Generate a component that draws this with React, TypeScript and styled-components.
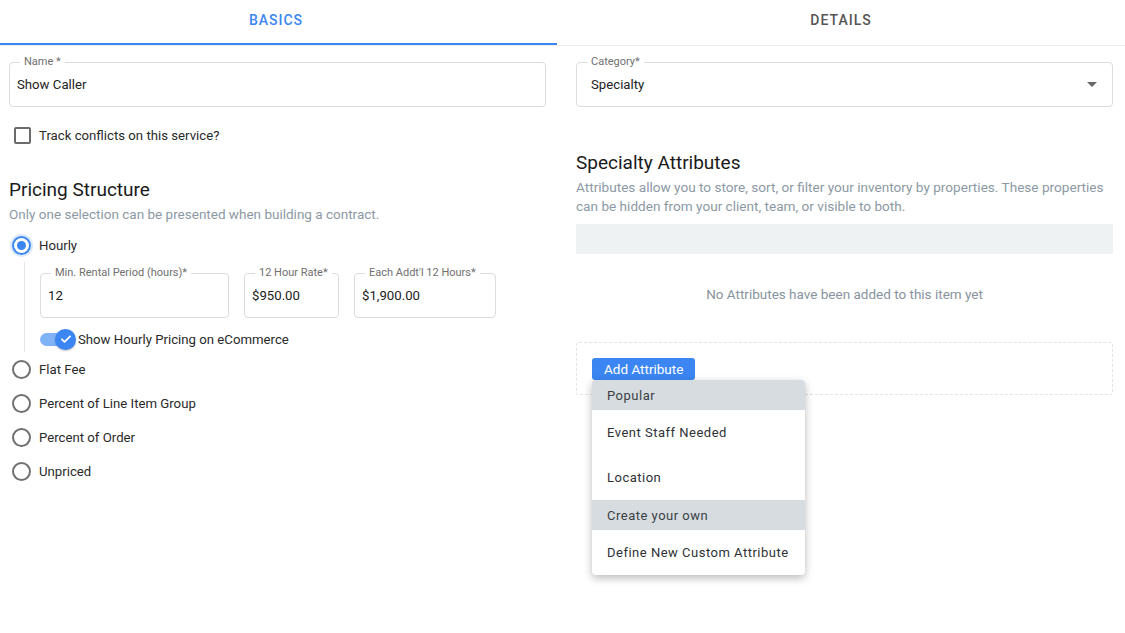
import React from "react";
import styled, { createGlobalStyle } from "styled-components";

const GlobalStyle = createGlobalStyle`
  html, body {
    margin: 0;
    padding: 0;
    background: #ffffff;
    font-family: Roboto, "Liberation Sans", Arial, sans-serif;
    color: #222;
  }
  * { box-sizing: border-box; }
`;

const BLUE = "#3b86f2";

type FieldProps = {
  label: string;
  value: string;
  width?: string;
  select?: boolean;
};

const Field = ({ label, value, width, select }: FieldProps) => (
  <FieldBox $width={width}>
    <FieldLegend>{label}</FieldLegend>
    <FieldValue $select={select}>
      <span>{value}</span>
      {select && <ArrowDown />}
    </FieldValue>
  </FieldBox>
);

const Radio = ({ label, checked }: { label: string; checked?: boolean }) => (
  <RadioRow>
    <RadioCircle $checked={checked}>{checked && <RadioDot />}</RadioCircle>
    <RowText>{label}</RowText>
  </RadioRow>
);

export default function App() {
  //render
  return (
    <>
      <GlobalStyle />
      <Page>
        <TabBar>
          <Tab $active $width="557px">Basics</Tab>
          <Tab>Details</Tab>
        </TabBar>
        <Columns>
          <Column>
            <Field label="Name *" value="Show Caller" />
            <CheckRow>
              <CheckBox />
              <RowText>Track conflicts on this service?</RowText>
            </CheckRow>
            <Heading $top="33px">Pricing Structure</Heading>
            <SubText>Only one selection can be presented when building a contract.</SubText>
            <RadioGroup>
              <Radio label="Hourly" checked />
              <HourlyBlock>
                <FieldRow>
                  <Field label="Min. Rental Period (hours)*" value="12" width="189px" />
                  <Field label="12 Hour Rate*" value="$950.00" width="95px" />
                  <Field label="Each Addt'l 12 Hours*" value="$1,900.00" width="142px" />
                </FieldRow>
                <SwitchRow>
                  <SwitchTrack>
                    <SwitchThumb>
                      <svg width="14" height="14" viewBox="0 0 24 24" fill="none">
                        <path d="M5 12.5l4.5 4.5L19 7.5" stroke="#fff" strokeWidth="3" strokeLinecap="round" strokeLinejoin="round" />
                      </svg>
                    </SwitchThumb>
                  </SwitchTrack>
                  <RowText>Show Hourly Pricing on eCommerce</RowText>
                </SwitchRow>
              </HourlyBlock>
              <Radio label="Flat Fee" />
              <Radio label="Percent of Line Item Group" />
              <Radio label="Percent of Order" />
              <Radio label="Unpriced" />
            </RadioGroup>
          </Column>

          <Column>
            <Field label="Category*" value="Specialty" select />
            <Heading $top="44px">Specialty Attributes</Heading>
            <Description>
              Attributes allow you to store, sort, or filter your inventory by properties. These properties can be
              hidden from your client, team, or visible to both.
            </Description>
            <GrayBar />
            <EmptyText>No Attributes have been added to this item yet</EmptyText>
            <DashedBox>
              <MenuAnchor>
                <AddButton>Add Attribute</AddButton>
                <Menu>
                  <MenuHeader>Popular</MenuHeader>
                  <MenuItem>Event Staff Needed</MenuItem>
                  <MenuItem>Location</MenuItem>
                  <MenuHeader>Create your own</MenuHeader>
                  <MenuItem>Define New Custom Attribute</MenuItem>
                </Menu>
              </MenuAnchor>
            </DashedBox>
          </Column>
        </Columns>
      </Page>
    </>
  );
}

//style
const Page = styled.div`
  width: 1125px;
  height: 633px;
  overflow: hidden;
`;

const TabBar = styled.div`
  display: flex;
  height: 46px;
  border-bottom: 1px solid #ececec;
`;

const Tab = styled.div<{ $active?: boolean; $width?: string }>`
  display: flex;
  align-items: center;
  justify-content: center;
  width: ${(p) => p.$width || "auto"};
  flex: ${(p) => (p.$width ? "none" : "1")};
  height: 45px;
  padding-bottom: 4px;
  padding-right: ${(p) => (p.$active ? "5px" : "0")};
  font-size: 14px;
  font-weight: 500;
  letter-spacing: 1px;
  text-transform: uppercase;
  color: ${(p) => (p.$active ? BLUE : "#555")};
  border-bottom: 2px solid ${(p) => (p.$active ? BLUE : "transparent")};
  margin-bottom: -1px;
`;

const Columns = styled.div`
  display: grid;
  grid-template-columns: 537px 537px;
  column-gap: 30px;
  padding: 10px 12px 0 9px;
`;

const Column = styled.div`
  display: flex;
  flex-direction: column;
`;

const FieldBox = styled.fieldset<{ $width?: string }>`
  width: ${(p) => p.$width || "100%"};
  height: 51px;
  margin: 0;
  padding: 0 12px 0 7px;
  border: 1px solid #dcdcdc;
  border-radius: 4px;
  min-width: 0;
`;

const FieldLegend = styled.legend`
  padding: 0 4px;
  margin-left: 3px;
  font-size: 11px;
  line-height: 12px;
  white-space: nowrap;
  color: #6f6f6f;
`;

const FieldValue = styled.div<{ $select?: boolean }>`
  display: flex;
  align-items: center;
  justify-content: space-between;
  height: 32px;
  padding-left: ${(p) => (p.$select ? "7px" : "0")};
  font-size: 13.2px;
  color: #222;
`;

const ArrowDown = styled.span`
  width: 0;
  height: 0;
  margin-right: 3px;
  border-left: 5px solid transparent;
  border-right: 5px solid transparent;
  border-top: 5px solid #666;
`;

const RowText = styled.span`
  font-size: 13.2px;
  color: #2a2a2a;
`;

const CheckRow = styled.div`
  display: flex;
  align-items: center;
  gap: 8px;
  height: 20px;
  margin-top: 18px;
  padding-left: 5px;
`;

const CheckBox = styled.span`
  width: 17px;
  height: 17px;
  border: 2px solid #6b6b6b;
  border-radius: 2px;
`;

const Heading = styled.h2<{ $top: string }>`
  margin: ${(p) => p.$top} 0 0;
  font-size: 19px;
  line-height: 24px;
  font-weight: 400;
  color: #1a1a1a;
`;

const SubText = styled.p`
  margin: 3px 0 0;
  font-size: 13.5px;
  line-height: 18px;
  color: #8c99a4;
`;

const RadioGroup = styled.div`
  display: flex;
  flex-direction: column;
  margin-top: 5px;
`;

const RadioRow = styled.div`
  display: flex;
  align-items: center;
  gap: 8px;
  height: 34px;
  padding-left: 3px;
`;

const RadioCircle = styled.span<{ $checked?: boolean }>`
  display: flex;
  align-items: center;
  justify-content: center;
  width: 19px;
  height: 19px;
  border-radius: 50%;
  border: 2px solid ${(p) => (p.$checked ? BLUE : "#707070")};
  box-shadow: ${(p) => (p.$checked ? "0 0 0 2px rgba(59,134,242,0.18)" : "none")};
`;

const RadioDot = styled.span`
  width: 9px;
  height: 9px;
  border-radius: 50%;
  background: ${BLUE};
`;

const HourlyBlock = styled.div`
  display: flex;
  flex-direction: column;
  margin-left: 15px;
  padding: 5px 0 3px 15px;
  border-left: 1px solid #e6e6e6;
`;

const FieldRow = styled.div`
  display: flex;
  gap: 15px;
`;

const SwitchRow = styled.div`
  display: flex;
  align-items: center;
  gap: 3px;
  height: 20px;
  margin-top: 11px;
`;

const SwitchTrack = styled.span`
  display: flex;
  align-items: center;
  justify-content: flex-end;
  width: 35px;
  height: 13px;
  border-radius: 7px;
  background: #80b3f6;
`;

const SwitchThumb = styled.span`
  display: flex;
  align-items: center;
  justify-content: center;
  width: 21px;
  height: 21px;
  margin-right: -1px;
  border-radius: 50%;
  background: ${BLUE};
  box-shadow: 0 1px 2px rgba(0, 0, 0, 0.25);
`;

const Description = styled.p`
  margin: 3px 0 0;
  font-size: 13.6px;
  line-height: 19px;
  color: #8c99a4;
`;

const GrayBar = styled.div`
  height: 30px;
  margin-top: 8px;
  background: #eff2f3;
`;

const EmptyText = styled.div`
  margin-top: 30px;
  font-size: 13.5px;
  line-height: 20px;
  text-align: center;
  color: #87939d;
`;

const DashedBox = styled.div`
  height: 53px;
  margin-top: 38px;
  padding: 15px;
  border: 1px dashed #e4e4e4;
  border-radius: 3px;
`;

const MenuAnchor = styled.div`
  position: relative;
  display: inline-block;
`;

const AddButton = styled.button`
  height: 22px;
  padding: 0 12px;
  border: none;
  border-radius: 3px;
  background: ${BLUE};
  color: #fff;
  font-family: Roboto, "Liberation Sans", Arial, sans-serif;
  font-size: 13.5px;
  line-height: 22px;
`;

const Menu = styled.div`
  position: absolute;
  top: 22px;
  left: 0;
  width: 213px;
  display: flex;
  flex-direction: column;
  background: #fff;
  border-radius: 4px;
  overflow: hidden;
  box-shadow: 0 3px 8px rgba(0, 0, 0, 0.28);
  z-index: 5;
`;

const MenuHeader = styled.div`
  display: flex;
  align-items: center;
  height: 30px;
  padding-left: 15px;
  background: #d7dce0;
  font-size: 13px;
  letter-spacing: 0.5px;
  color: #3a3f44;
`;

const MenuItem = styled.div`
  display: flex;
  align-items: center;
  height: 45px;
  padding-left: 15px;
  font-size: 13px;
  letter-spacing: 0.5px;
  color: #2e3236;
`;
